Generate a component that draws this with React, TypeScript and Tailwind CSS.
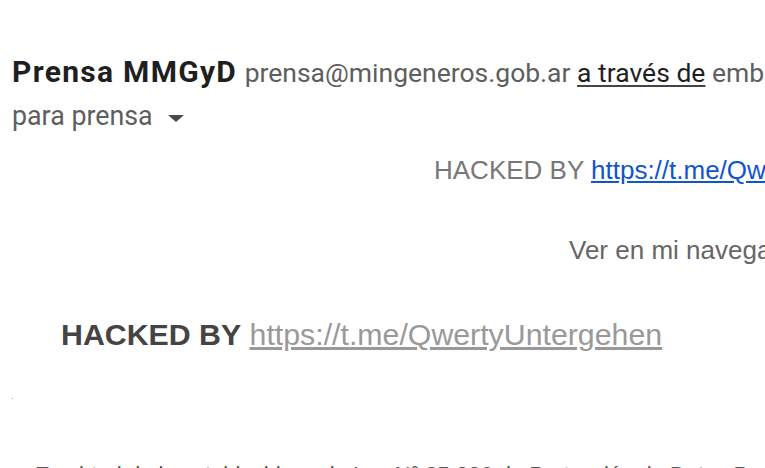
import React from 'react';

export default function App() {
  return (
    <div className="w-[765px] h-[468px] overflow-hidden bg-white">
      <div className="pl-3 pt-[54px] font-['Roboto',sans-serif] whitespace-nowrap">
        <div className="text-[30px] leading-[36px]">
          <span className="font-bold text-[#1f1f1f] tracking-[1.3px]">Prensa MMGyD</span>{' '}
          <span className="text-[26.5px] text-[#5e5e5e]">
            prensa@mingeneros.gob.ar{' '}
            <span className="text-[#1f1f1f] underline decoration-2 decoration-[#444] underline-offset-[3px]">a través de</span>{' '}
            embluemail.com
          </span>
        </div>
        <div className="flex items-center gap-[15px] mt-[9px] leading-8">
          <span className="text-[26.8px] text-[#5e5e5e]">para prensa</span>
          <svg width="16" height="7" viewBox="0 0 16 7" className="mt-[4px]">
            <path d="M0 0 L16 0 L8 7 Z" fill="#4a4a4a" />
          </svg>
        </div>
      </div>

      <div className="font-['Liberation_Sans',Arial,sans-serif] whitespace-nowrap">
        <div className="pl-[434px] mt-[22px] text-[26px] leading-8 text-[#777]">
          HACKED BY <a className="text-[#1155cc] underline">https://t.me/QwertyUntergehen</a>
        </div>
        <div className="pl-[569px] mt-[48px] text-[26px] leading-8 text-[#666]">
          Ver en mi navegador
        </div>
        <div className="pl-[61px] mt-[51px] text-[30.3px] leading-9 text-[#444]">
          <span className="font-bold">HACKED BY</span>{' '}
          <a className="text-[#999] underline">https://t.me/QwertyUntergehen</a>
        </div>
        <div className="ml-[12px] mt-[45px] w-px h-px bg-[#aaa]" />
        <div className="pl-[35px] mt-[62px] text-[22px] leading-7 text-[#555]">
          En virtud de lo establecido en la Ley N° 25.326 de Protección de Datos Personales
        </div>
      </div>
    </div>
  );
}
